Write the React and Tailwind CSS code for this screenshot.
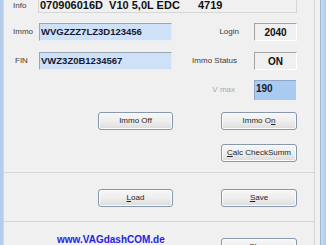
import React from 'react'

const font = { fontFamily: '"Liberation Sans", Arial, sans-serif' }

const Btn = ({ w = 'w-[76px]', children }) => (
  <div
    className={`${w} h-[18px] shrink-0 rounded-[3px] border border-[#8797ad] bg-linear-to-b from-[#f7f7f7] via-[#eeeeee] to-[#dcdcdc] shadow-[inset_0_0_0_1px_#fbfbfb] flex items-center justify-center text-[8px] text-[#1e1e1e]`}
  >
    {children}
  </div>
)

const Label = ({ w, className = '', children }) => (
  <div className={`${w} shrink-0 text-[8px] leading-[10px] text-[#3a3a3a] ${className}`}>{children}</div>
)

const BlueBox = ({ children }) => (
  <div className="w-[133px] h-[18px] shrink-0 bg-[#cfe1f6] border-t border-l border-t-[#9aa6b2] border-l-[#9aa6b2] border-r border-b border-r-[#e6eef7] border-b-[#e6eef7] flex items-center pl-[1px] text-[9.5px] font-bold text-[#141a33]">
    {children}
  </div>
)

const GrayBox = ({ w = 'w-[43px]', h = 'h-[18px]', children }) => (
  <div className={`${w} ${h} shrink-0 bg-[#f0f0f0] border-t border-l border-t-[#a4a4a4] border-l-[#a4a4a4] border-r border-b border-r-white border-b-white flex items-center justify-center text-[10px] font-bold text-[#111]`}>
    {children}
  </div>
)

export default function App() {
  return (
    <div className="w-[326px] h-[245px] overflow-hidden flex bg-[#f0f0f0]" style={font}>
      {/* left window frame */}
      <div className="w-[3px] h-full bg-[#b4cdea] shrink-0" />

      <div className="w-[312px] h-full shrink-0 flex flex-col overflow-hidden">
        {/* main group */}
        <div className="h-[173px] shrink-0 border-l border-r border-b border-[#d5d5d5] flex flex-col">
          <div className="flex h-[13px]">
            <Label w="w-[34px]" className="pl-[9px] pt-[1px]">Info</Label>
            <div className="w-[259px] h-[13px] border-l border-r border-b border-[#d6d6d6] flex items-start pl-[1px] text-[11px] leading-[11px] font-bold text-[#111] whitespace-pre">
              <span className="w-[158px] shrink-0">070906016D  V10 5,0L EDC</span>
              <span>4719</span>
            </div>
          </div>

          <div className="flex h-[18px] mt-[10px] items-center">
            <Label w="w-[35px]" className="pl-[9px]">Immo</Label>
            <BlueBox>WVGZZZ7LZ3D123456</BlueBox>
            <Label w="w-[82px]" className="text-right pr-[15px]">Login</Label>
            <GrayBox>2040</GrayBox>
          </div>

          <div className="flex h-[18px] mt-[11px] items-center">
            <Label w="w-[35px]" className="pl-[11px]">FIN</Label>
            <BlueBox>VWZ3Z0B1234567</BlueBox>
            <Label w="w-[82px]" className="text-right pr-[17px]">Immo Status</Label>
            <GrayBox>ON</GrayBox>
          </div>

          <div className="flex h-[20px] mt-[10px] items-center">
            <div className="w-[168px] shrink-0" />
            <Label w="w-[82px]" className="text-right pr-[19px] !text-[#a8a8a8]">V max</Label>
            <div className="w-[42px] h-[20px] shrink-0 bg-[#a9cbf1] border-t border-l border-[#8fa7c4] flex items-start pt-[2px] pl-[1px] text-[10px] leading-[12px] font-bold text-[#141a33]">
              190
            </div>
          </div>

          <div className="flex mt-[12px]">
            <div className="w-[94px] shrink-0" />
            <Btn w="w-[75px]">Immo Off</Btn>
            <div className="w-[48px] shrink-0" />
            <Btn>
              Immo O<span className="underline">n</span>
            </Btn>
          </div>

          <div className="flex mt-[14px]">
            <div className="w-[217px] shrink-0" />
            <Btn>
              <span className="underline">C</span>alc CheckSumm
            </Btn>
          </div>
        </div>

        {/* load / save group */}
        <div className="h-[49px] shrink-0 border-l border-r border-b border-[#d5d5d5] flex flex-col">
          <div className="flex mt-[16px]">
            <div className="w-[94px] shrink-0" />
            <Btn w="w-[75px]">
              <span className="underline">L</span>oad
            </Btn>
            <div className="w-[48px] shrink-0" />
            <Btn>
              <span className="underline">S</span>ave
            </Btn>
          </div>
        </div>

        {/* footer group */}
        <div className="h-[40px] shrink-0 border-l border-r border-[#d5d5d5] flex items-start">
          <div className="w-[217px] shrink-0 pl-[53px] pt-[12px] text-[10px] leading-[12px] font-bold text-[#2323e6]">
            www.VAGdashCOM.de
          </div>
          <div className="mt-[16px]">
            <Btn>
              <span className="underline">C</span>lose
            </Btn>
          </div>
        </div>
      </div>

      <div className="w-[5px] shrink-0" />
      {/* right window frame */}
      <div className="w-[6px] h-full shrink-0 border-l border-[#9fb7d4] bg-linear-to-r from-[#c3daf2] to-[#b3cdea]" />
    </div>
  )
}
